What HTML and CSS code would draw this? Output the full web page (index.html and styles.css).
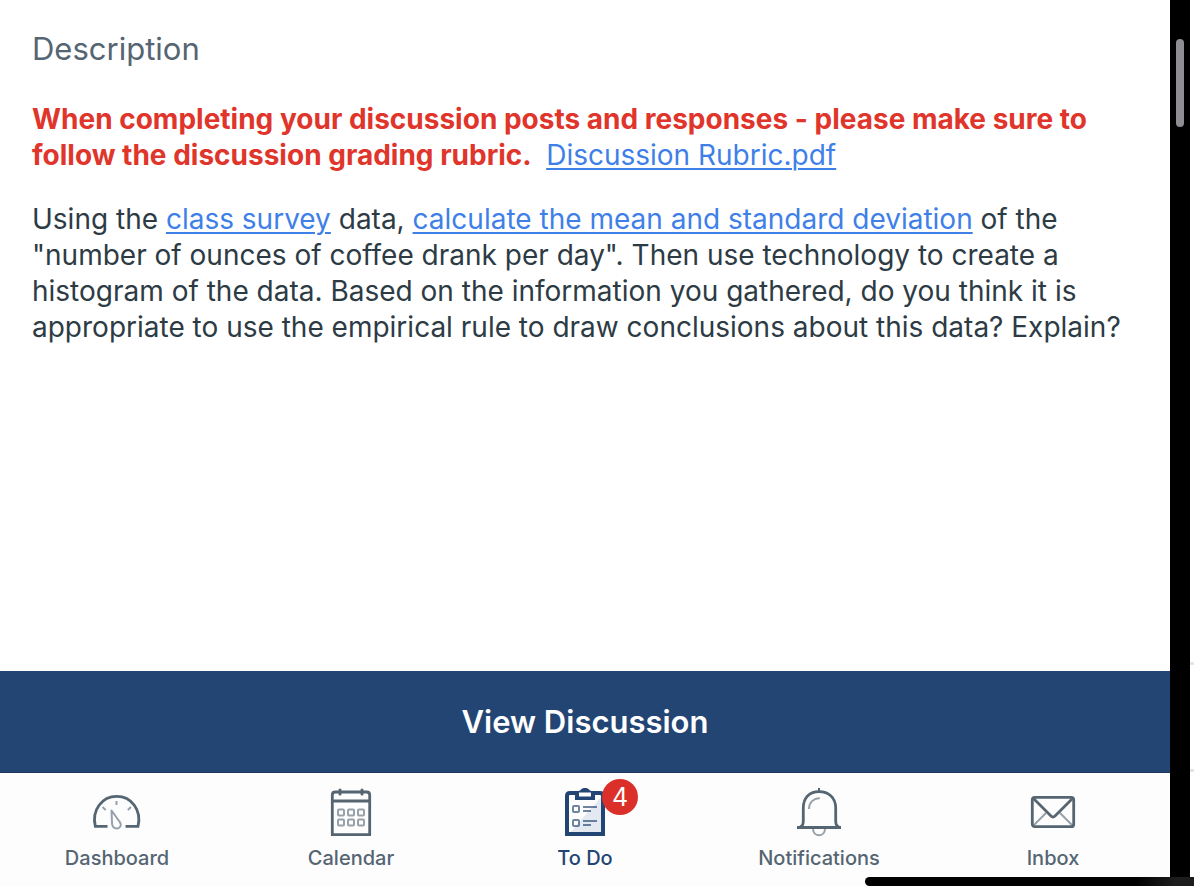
FILE: index.html
```html
<!DOCTYPE html>
<html lang="en">
<head>
<meta charset="utf-8">
<meta name="viewport" content="width=device-width, initial-scale=1">
<title>Discussion</title>
<link rel="stylesheet" href="styles.css">
</head>
<body>
<div class="screen">
  <div class="app">
    <main class="content">
      <h1 class="heading">Description</h1>
      <p class="text"><strong class="notice">When completing your discussion posts and responses - please make sure to follow the discussion grading rubric.&nbsp;</strong> <a class="link" href="#rubric">Discussion Rubric.pdf</a></p>
      <p class="text">Using the <a class="link" href="#survey">class survey</a> data, <a class="link" href="#calculate">calculate the mean and standard deviation</a> of the "number of ounces of coffee drank per day". Then use technology to create a histogram of the data. Based on the information you gathered, do you think it is appropriate to use the empirical rule to draw conclusions about this data? Explain?</p>
    </main>
    <button class="view" type="button">View Discussion</button>
    <nav class="tabs">
      <a class="tab" href="#dashboard">
        <span class="icon"><svg viewBox="0 0 48 48" width="48" height="48" fill="none" stroke="currentColor">
          <path d="M14.500 38.300H2.300C-1.500 22 9 8.400 23.700 8.400S48.900 22 45 38.300H32.500" stroke-width="2.800"/>
          <g class="faint" stroke-width="2"><path d="M23.500 13v4M9.500 19l3.200 3M38 19l-3.200 3"/><path d="M18.500 22.500l8.300 11.500c2.500 4-.5 6.500-3.300 6.500s-4.600-2.500-4.500-5.500z" stroke-linejoin="round"/></g>
        </svg></span>
        <span>Dashboard</span>
      </a>
      <a class="tab" href="#calendar">
        <span class="icon"><svg viewBox="0 0 48 48" width="48" height="48" fill="none" stroke="currentColor">
          <path d="M5.300 46.700V7q0-3 3-3h31.400q3 0 3 3v39.700zM5 13h38" stroke-width="2.800"/>
          <path d="M13 2v4M35 2v4" stroke-width="3" stroke-linecap="round"/>
          <g class="faint" stroke-width="2"><rect x="11" y="21.500" width="6" height="6" rx="1"/><rect x="21" y="21.500" width="6" height="6" rx="1"/><rect x="31" y="21.500" width="6" height="6" rx="1"/><rect x="11" y="31.500" width="6" height="6" rx="1"/><rect x="21" y="31.500" width="6" height="6" rx="1"/><rect x="31" y="31.500" width="6" height="6" rx="1"/></g>
        </svg></span>
        <span>Calendar</span>
      </a>
      <a class="tab active" href="#todo" aria-current="page">
        <span class="icon"><svg viewBox="0 0 48 48" width="48" height="48" fill="none" stroke="currentColor">
          <path d="M42 7v39H8z" fill="#e4e8f0" stroke="none"/>
          <path d="M6 46V8q0-3 3-3h30q3 0 3 3v38z" stroke-width="4"/>
          <path d="M14 12V3h3q2 0 3-1.500t3-1.500h2q2 0 3 1.500t3 1.500h3v9z" fill="currentColor" stroke="none"/>
          <rect x="18" y="4.500" width="12" height="4" fill="#fff" stroke="none"/>
          <g class="soft" stroke-width="2"><rect x="12" y="18" width="6" height="6" rx="1"/><rect x="12" y="32" width="6" height="6" rx="1"/><path d="M22 19h14M22 23h8M22 33h14M22 37h8"/></g>
        </svg><span class="badge">4</span></span>
        <span>To Do</span>
      </a>
      <a class="tab" href="#notifications">
        <span class="icon"><svg viewBox="0 0 48 48" width="48" height="48" fill="none" stroke="currentColor">
          <path class="faint" d="M18 40.500c0 9 12 9 12 0M14 21c0-6.500 4.500-10.500 10.800-11" stroke-width="2"/>
          <path d="M24 0v4" stroke-width="2"/>
          <path d="M2 39.500h44" stroke-width="2.800"/>
          <path d="M5 39q3.300-1 3.300-6V20C8.300 9 15 3.700 24 3.700S40.700 9 40.700 20v13q0 5 3.300 6" stroke-width="2.800"/>
        </svg></span>
        <span>Notifications</span>
      </a>
      <a class="tab" href="#inbox">
        <span class="icon"><svg viewBox="0 0 48 48" width="48" height="48" fill="none" stroke="currentColor">
          <path class="faint" d="M4 38l13-13M44 38L31 25" stroke-width="2"/>
          <rect x="3.300" y="9.300" width="41.400" height="29.400" rx="2.500" stroke-width="2.800"/>
          <path d="M4.500 10.500L22 28q2 2 4 0L43.500 10.500" stroke-width="2.800"/>
        </svg></span>
        <span>Inbox</span>
      </a>
    </nav>
  </div>
  <div class="bezel"><div class="thumb"></div></div>
  <div class="edge"><i class="rule"></i><i class="rule"></i></div>
  <div class="home"></div>
</div>
</body>
</html>
```
FILE: styles.css
```css
* { box-sizing: border-box; }
body {
  margin: 0;
  background: #fff;
  color: #2d3b45;
  font-family: Inter, "Liberation Sans", sans-serif;
}
.screen {
  position: relative;
  display: grid;
  grid-template-columns: 1fr 20px 4px;
  min-height: 100vh;
  overflow: hidden;
}
.app { display: flex; flex-direction: column; }
.content { flex: 1; padding: 28px 32px; }
.heading {
  margin: 0 0 31px;
  color: #556572;
  font-size: 31px;
  font-weight: 400;
  line-height: 42px;
}
.text {
  margin: 0 0 28px;
  font-size: 28px;
  font-weight: 400;
  line-height: 36px;
}
.notice { color: #e0352b; font-weight: 700; }
.link {
  color: #3f7fe8;
  text-decoration-thickness: 2px;
  text-underline-offset: 3px;
}
.view {
  height: 102px;
  border: 0;
  border-bottom: 1px solid #1d3658;
  background: #234573;
  color: #fff;
  font: 600 31px/40px Inter, "Liberation Sans", sans-serif;
}
.tabs {
  display: grid;
  grid-template-columns: repeat(5, 1fr);
  height: 113px;
  padding-top: 15px;
  background: #fdfdfd;
}
.tab {
  display: flex;
  flex-direction: column;
  align-items: center;
  gap: 10px;
  color: #556572;
  font-size: 20px;
  font-weight: 500;
  line-height: 24px;
  text-decoration: none;
}
.active { color: #234573; }
.icon { position: relative; height: 48px; }
.icon svg { display: block; overflow: visible; }
.faint { opacity: .6; }
.soft { opacity: .65; }
.badge {
  position: absolute;
  top: -9px;
  left: 41px;
  width: 36px;
  height: 36px;
  border-radius: 50%;
  background: #db3029;
  color: #fff;
  font-size: 25px;
  font-weight: 400;
  line-height: 36px;
  text-align: center;
}
.bezel { padding: 39px 6px; background: #000; }
.thumb { width: 8px; height: 88px; border-radius: 4px; background: #8e8d93; }
.edge {
  display: flex;
  flex-direction: column;
  justify-content: flex-end;
  gap: 104px;
  padding-bottom: 114px;
}
.rule { height: 3px; background: #e3e4e6; }
.home {
  position: absolute;
  right: 0;
  bottom: 0;
  width: 329px;
  height: 9px;
  border-radius: 5px 0 0 5px;
  background: linear-gradient(90deg, #000 82%, #1c1c1c 94%);
}
```
